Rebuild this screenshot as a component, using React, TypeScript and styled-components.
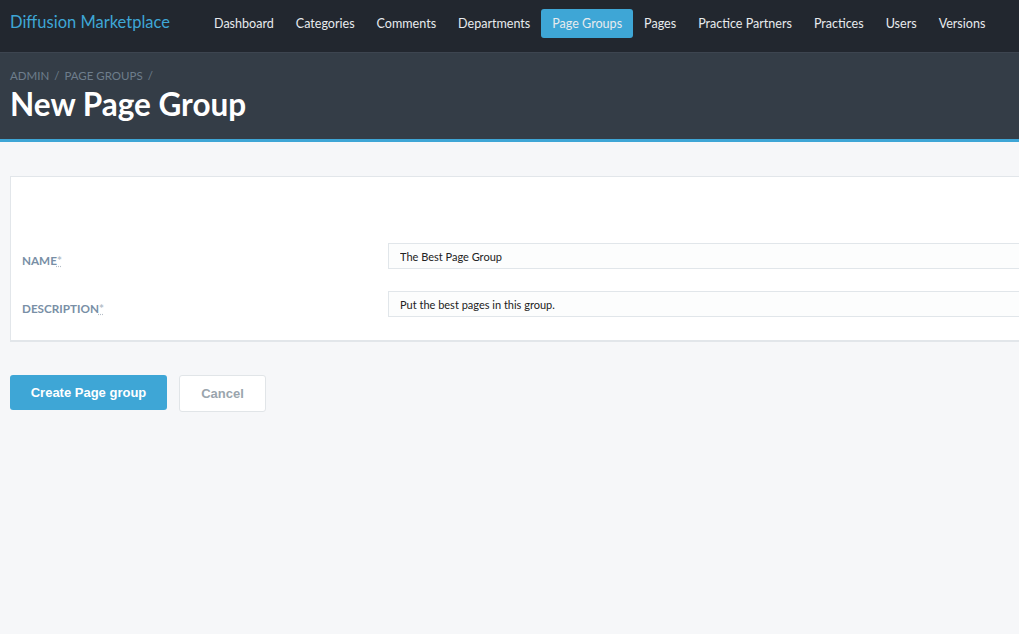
import React from "react";
import styled, { createGlobalStyle } from "styled-components";

const GlobalStyle = createGlobalStyle`
  html, body {
    margin: 0;
    padding: 0;
    background: #f6f7f9;
    overflow: hidden;
  }
  body {
    font-family: "Lato", "Liberation Sans", sans-serif;
  }
`;

const navItems = [
  "Dashboard",
  "Categories",
  "Comments",
  "Departments",
  "Page Groups",
  "Pages",
  "Practice Partners",
  "Practices",
  "Users",
  "Versions",
];

const App = () => (
  <Page>
    <GlobalStyle />
    <TopBar>
      <Brand>Diffusion Marketplace</Brand>
      <Nav>
        {navItems.map((item) => (
          <NavLink key={item} active={item === "Page Groups"}>
            {item}
          </NavLink>
        ))}
      </Nav>
    </TopBar>
    <Header>
      <Crumbs>
        <span>Admin</span>
        <Sep>/</Sep>
        <span>Page Groups</span>
        <Sep>/</Sep>
      </Crumbs>
      <Title>New Page Group</Title>
    </Header>
    <Main>
      <Card>
        <Spacer />
        <Row>
          <Label>
            Name<Req>*</Req>
          </Label>
          <Input defaultValue="The Best Page Group" />
        </Row>
        <Row>
          <Label>
            Description<Req>*</Req>
          </Label>
          <Input defaultValue="Put the best pages in this group." />
        </Row>
      </Card>
      <Actions>
        <PrimaryButton type="button">Create Page group</PrimaryButton>
        <CancelButton type="button">Cancel</CancelButton>
      </Actions>
    </Main>
  </Page>
);

const Page = styled.div`
  width: 1300px;
  min-height: 634px;
`;
const TopBar = styled.div`
  height: 52px;
  background: #22272f;
  border-bottom: 1px solid #3d4550;
  display: flex;
  align-items: center;
  padding: 0 10px;
`;
const Brand = styled.div`
  color: #3ea6d6;
  font-size: 16.5px;
  width: 193px;
  margin-top: -8px;
`;
const Nav = styled.div`
  display: flex;
  align-items: center;
  margin-top: -6px;
`;
const NavLink = styled.div<{ active?: boolean }>`
  color: #e8ebee;
  font-size: 12.55px;
  padding: 7px 11px;
  border-radius: 3px;
  background: ${(p) => (p.active ? "#3ea6d6" : "transparent")};
`;
const Header = styled.div`
  background: #343d47;
  height: 86px;
  border-bottom: 3px solid #3ea6d6;
  padding: 0 10px;
  box-sizing: content-box;
`;
const Crumbs = styled.div`
  padding-top: 16px;
  font-size: 11.5px;
  color: #6e7d8c;
  text-transform: uppercase;
  display: flex;
  gap: 5px;
`;
const Sep = styled.span`
  color: #6e7d8c;
`;
const Title = styled.h1`
  margin: 3px 0 0;
  color: #ffffff;
  font-size: 31.5px;
  font-weight: 700;
`;
const Main = styled.div`
  padding: 34px 10px 0;
`;
const Card = styled.div`
  background: #ffffff;
  border: 1px solid #e2e6ea;
  border-bottom-width: 2px;
  padding: 0 11px 23px;
`;
const Spacer = styled.div`
  height: 66px;
`;
const Row = styled.div`
  display: grid;
  grid-template-columns: 366px 1fr;
  align-items: center;
  height: 26px;
  margin-bottom: 22px;
  &:last-child {
    margin-bottom: 0;
  }
`;
const Label = styled.div`
  color: #798fa6;
  font-size: 11.7px;
  font-weight: 700;
  text-transform: uppercase;
  padding-top: 8px;
`;
const Req = styled.abbr`
  color: #b5bec8;
  text-decoration: underline dotted;
`;
const Input = styled.input`
  height: 26px;
  box-sizing: border-box;
  border: 1px solid #e1e6ea;
  background: #fcfdfd;
  padding: 0 11px;
  font-family: "Lato", "Liberation Sans", sans-serif;
  font-size: 11px;
  color: #222;
  outline: none;
`;
const Actions = styled.div`
  display: flex;
  align-items: flex-start;
  gap: 12px;
  margin-top: 33px;
`;
const PrimaryButton = styled.button`
  height: 35px;
  width: 157px;
  border: none;
  border-radius: 3px;
  background: #3ea6d6;
  color: #ffffff;
  font-family: "Liberation Sans", Arial, sans-serif;
  font-weight: 700;
  font-size: 13px;
`;
const CancelButton = styled.button`
  height: 37px;
  width: 87px;
  border: 1px solid #e1e5e8;
  border-radius: 3px;
  background: #ffffff;
  color: #9aa5ad;
  font-family: "Liberation Sans", Arial, sans-serif;
  font-weight: 700;
  font-size: 13px;
`;

export default App;
